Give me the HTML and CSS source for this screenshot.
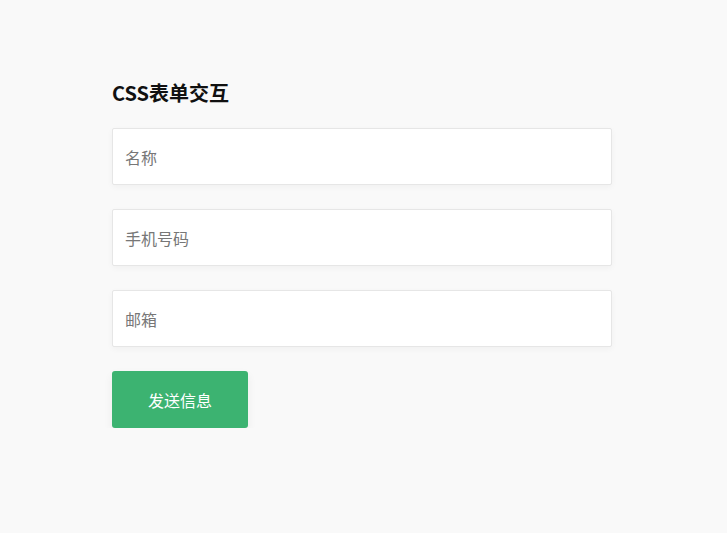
FILE: index.html
```html
<!DOCTYPE html>
<html>

<head>
    <meta charset="utf-8">
    <title>CSS表单交互</title>
    <link rel="stylesheet" href="styles.css">
</head>

<body>
    <div class="wrap">
        <h2>CSS表单交互</h2>

        <!-- form -->
        <form class="form">
            <input type="text" placeholder="名称">
            <input type="text" placeholder="手机号码">
            <input type="text" placeholder="邮箱">
            <button type="button" class="send">发送信息</button>
        </form>
    </div>
</body>

</html>
```

FILE: styles.css
```css
* {
    margin: 0;
    padding: 0;
    box-sizing: border-box;
}

body {
    background-color: #f9f9f9;
    font-family: "Noto Sans CJK SC", "Liberation Sans", sans-serif;
}

.wrap {
    width: 500px;
    margin-left: 112px;
    padding-top: 79px;
}

h2 {
    font-size: 20px;
    line-height: 28px;
    font-weight: bold;
    color: #111;
    margin-bottom: 21px;
}

.form {
    display: flex;
    flex-direction: column;
    align-items: flex-start;
    gap: 24px;
}

.form input {
    width: 100%;
    height: 57px;
    padding: 0 12px;
    font-size: 16px;
    font-family: inherit;
    border: 1px solid #e6e6e6;
    border-radius: 2px;
    background-color: #fff;
    box-shadow: 0 2px 6px rgba(0, 0, 0, 0.04);
    outline: none;
}

.form input::placeholder {
    color: #777;
}

.send {
    width: 136px;
    height: 57px;
    border: none;
    border-radius: 3px;
    background-color: #3cb371;
    color: #fff;
    font-size: 16px;
    font-family: inherit;
    box-shadow: 0 4px 10px rgba(0, 0, 0, 0.06);
    cursor: pointer;
}
```
